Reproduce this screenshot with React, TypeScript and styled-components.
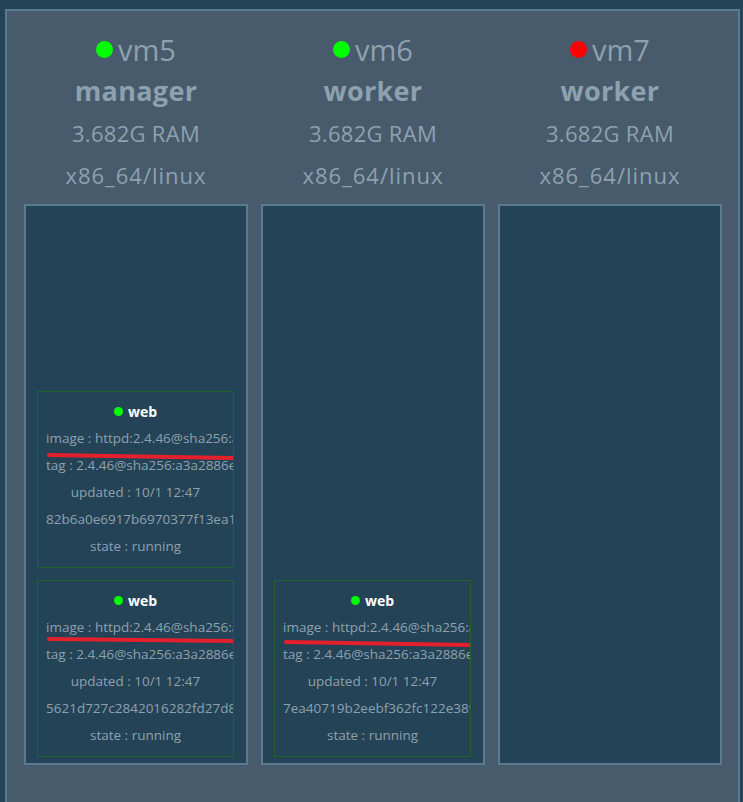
import React from "react";
import styled, { createGlobalStyle } from "styled-components";

const Global = createGlobalStyle`
  html, body { margin: 0; padding: 0; background: #254356; }
  body { font-family: "Open Sans", "Noto Sans", sans-serif; overflow: hidden; }
`;

const Page = styled.div`
  padding: 9px 3px 0 5px;
`;

const Panel = styled.div`
  display: flex;
  gap: 13px;
  padding: 0 16px 40px 17px;
  background: #475b6d;
  border: 2px solid #5a7a90;
`;

const Column = styled.div`
  width: 224px;
  display: flex;
  flex-direction: column;
  align-items: stretch;
`;

const Header = styled.div`
  padding: 17px 0 8px;
  display: flex;
  flex-direction: column;
  align-items: center;
  color: #8ea1ae;
`;

const NameRow = styled.div`
  display: flex;
  align-items: center;
  gap: 5px;
  height: 42px;
  font-size: 29px;
`;

const Dot = styled.span<{ $color: string; $size: number }>`
  display: inline-block;
  width: ${(p) => p.$size}px;
  height: ${(p) => p.$size}px;
  border-radius: 50%;
  background: ${(p) => p.$color};
`;

const HeaderLine = styled.div<{ $bold?: boolean; $size: number; $spacing?: number }>`
  height: 42px;
  line-height: 42px;
  font-size: ${(p) => p.$size}px;
  letter-spacing: ${(p) => p.$spacing ?? 0}px;
  font-weight: ${(p) => (p.$bold ? 700 : 400)};
`;

const Box = styled.div`
  height: 561px;
  box-sizing: border-box;
  border: 2px solid #5a7a90;
  background: #254356;
  display: flex;
  flex-direction: column;
  justify-content: flex-end;
  gap: 12px;
  padding: 0 12px 6px 11px;
`;

const Card = styled.div`
  position: relative;
  height: 177px;
  box-sizing: border-box;
  border: 1px solid #22622d;
  padding: 6px 8px;
  overflow: hidden;
  font-size: 13.5px;
  color: #8ea1ae;
  text-align: center;
`;

const Title = styled.div`
  height: 27px;
  display: flex;
  align-items: center;
  justify-content: center;
  gap: 5px;
  color: #ffffff;
  font-size: 14px;
  font-weight: 700;
`;

const Line = styled.div`
  height: 27px;
  line-height: 27px;
  white-space: nowrap;
`;

const Mark = styled.svg`
  position: absolute;
  left: 0;
  top: 0;
  pointer-events: none;
`;

type Task = { id: string; y1: number; y2: number };
type Node = {
  name: string;
  role: string;
  up: boolean;
  tasks: Task[];
};

const nodes: Node[] = [
  {
    name: "vm5",
    role: "manager",
    up: true,
    tasks: [
      { id: "82b6a0e6917b6970377f13ea1a2b", y1: 63, y2: 66 },
      { id: "5621d727c2842016282fd27d8e1f", y1: 58, y2: 60 },
    ],
  },
  {
    name: "vm6",
    role: "worker",
    up: true,
    tasks: [{ id: "7ea40719b2eebf362fc122e389a1", y1: 61, y2: 64 }],
  },
  { name: "vm7", role: "worker", up: false, tasks: [] },
];

function TaskCard({ task }: { task: Task }) {
  return (
    <Card>
      <Title>
        <Dot $color="#00ff00" $size={9} />
        web
      </Title>
      <Line>image : httpd:2.4.46@sha256:a3a2886ec250194804974932eaf4a4ba2b77c4ed</Line>
      <Line>tag : 2.4.46@sha256:a3a2886ec250194804974932eaf4a4ba2b77c4ed</Line>
      <Line>updated : 10/1 12:47</Line>
      <Line>{task.id}</Line>
      <Line>state : running</Line>
      <Mark width="198" height="177" viewBox="0 0 198 177">
        <path
          d={`M 11 ${task.y1} L 195 ${task.y2}`}
          stroke="#e3202b"
          strokeWidth="4"
          strokeLinecap="round"
          fill="none"
        />
      </Mark>
    </Card>
  );
}

export default function App() {
  return (
    <>
      <Global />
      <Page>
        <Panel>
          {nodes.map((n) => (
            <Column key={n.name}>
              <Header>
                <NameRow>
                  <Dot $color={n.up ? "#00ff00" : "#ff0000"} $size={17} />
                  {n.name}
                </NameRow>
                <HeaderLine $bold $size={27} $spacing={0.3}>{n.role}</HeaderLine>
                <HeaderLine $size={22} $spacing={0.3}>3.682G RAM</HeaderLine>
                <HeaderLine $size={22} $spacing={1}>x86_64/linux</HeaderLine>
              </Header>
              <Box>
                {n.tasks.map((t) => (
                  <TaskCard key={t.id} task={t} />
                ))}
              </Box>
            </Column>
          ))}
        </Panel>
      </Page>
    </>
  );
}
